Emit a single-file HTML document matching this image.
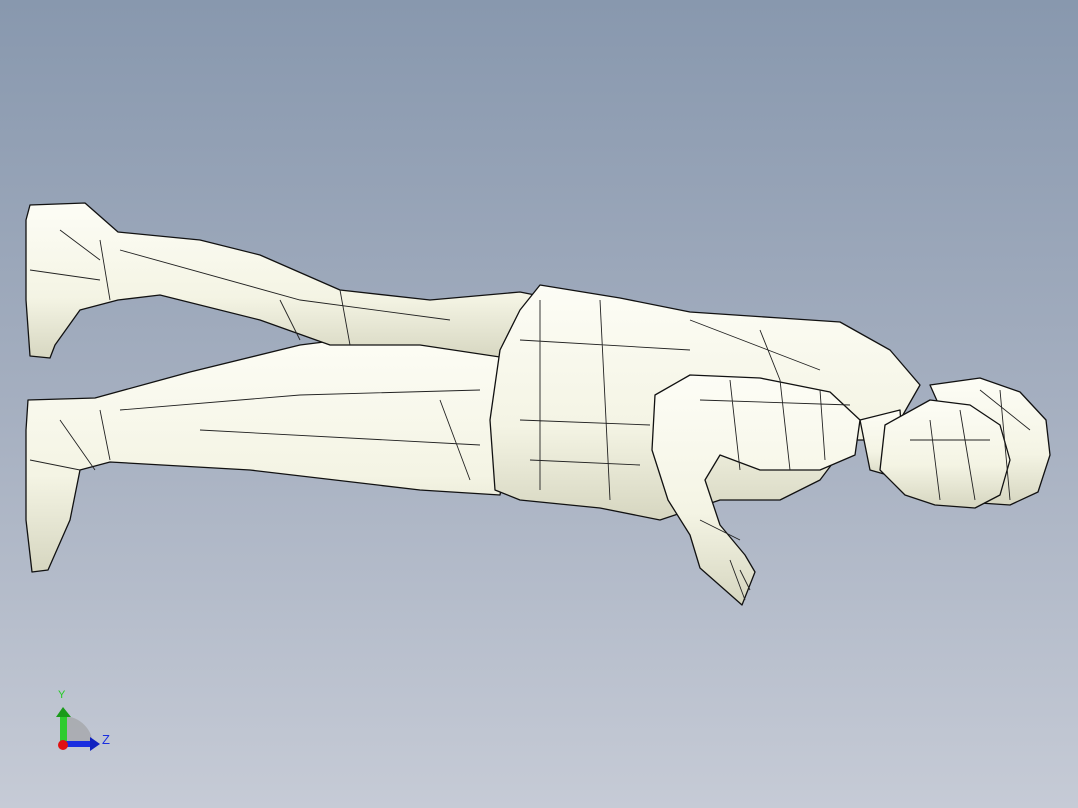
<!DOCTYPE html>
<html><head><style>
html,body{margin:0;padding:0;width:1078px;height:808px;overflow:hidden}
body{background:linear-gradient(180deg,#8898ae 0%,#a5afc0 50%,#c6cbd6 100%)}
svg{position:absolute;left:0;top:0}
</style></head><body>
<svg width="1078" height="808" viewBox="0 0 1078 808">
<defs>
<linearGradient id="f" x1="0" y1="0" x2="0" y2="1">
<stop offset="0" stop-color="#fdfdf6"/><stop offset="0.6" stop-color="#f4f4e4"/><stop offset="1" stop-color="#d6d6c0"/>
</linearGradient>
</defs>
<g fill="url(#f)" stroke="#111" stroke-width="1.3" stroke-linejoin="round">
<path d="M28,400 L95,398 L190,372 L300,345 L420,330 L500,330 L520,380 L500,495 L420,490 L250,470 L110,462 L80,470 L70,520 L48,570 L32,572 L26,520 L26,430 Z"/>
<path d="M30,205 L85,203 L118,232 L200,240 L260,255 L340,290 L430,300 L520,292 L560,300 L520,360 L420,345 L330,345 L260,320 L160,295 L118,300 L80,310 L55,345 L50,358 L30,356 L26,300 L26,220 Z"/>
<path d="M540,285 L620,298 L690,312 L780,318 L840,322 L890,350 L920,385 L900,420 L870,440 L850,440 L820,480 L780,500 L720,500 L660,520 L600,508 L520,500 L495,490 L490,420 L500,350 L520,310 Z"/>
<path d="M860,420 L900,410 L905,480 L870,470 Z"/>
<path d="M930,385 L980,378 L1020,392 L1046,420 L1050,455 L1038,492 L1010,505 L980,503 L960,480 L950,430 Z"/>
<path d="M885,425 L930,400 L970,405 L1000,425 L1010,460 L1000,495 L975,508 L935,505 L905,495 L880,470 Z"/>
<path d="M655,395 L690,375 L760,378 L830,392 L860,420 L855,455 L820,470 L760,470 L720,455 L705,480 L720,525 L745,555 L755,572 L742,605 L725,590 L700,568 L690,535 L668,500 L652,450 Z"/>
</g>
<g fill="none" stroke="#222" stroke-width="0.9">
<path d="M100,240 L110,300 M60,230 L100,260 M30,270 L100,280 M120,250 L300,300 L450,320 M280,300 L300,340 M340,290 L350,345"/>
<path d="M100,410 L110,460 M60,420 L95,470 M30,460 L80,470 M120,410 L300,395 L480,390 M200,430 L480,445 M440,400 L470,480"/>
<path d="M520,340 L690,350 M520,420 L650,425 M530,460 L640,465 M540,300 L540,490 M600,300 L610,500 M690,320 L820,370 M760,330 L780,380"/>
<path d="M700,400 L850,405 M730,380 L740,470 M780,380 L790,470 M820,390 L825,460 M700,520 L740,540"/>
<path d="M910,440 L990,440 M930,420 L940,500 M960,410 L975,500 M980,390 L1030,430 M1000,390 L1010,500"/>
<path d="M730,560 L745,600 M740,570 L750,590"/>
</g>
<path d="M63,746 L63,716 A30,30 0 0 1 93,746 Z" fill="#999" opacity="0.55"/>
<rect x="60" y="715" width="7" height="31" fill="#2ecc2e"/>
<polygon points="56,717 63,707 71,717" fill="#1a9a1a"/>
<rect x="62" y="741" width="30" height="6" fill="#1a2ee0"/>
<polygon points="90,737 100,744 90,751" fill="#1022c0"/>
<circle cx="63" cy="745" r="5" fill="#e01010"/>
<text x="58" y="698" font-family="Liberation Sans,sans-serif" font-size="11" fill="#22cc22">Y</text>
<text x="102" y="744" font-family="Liberation Sans,sans-serif" font-size="13" fill="#1a2ee0">Z</text>
</svg>
</body></html>
